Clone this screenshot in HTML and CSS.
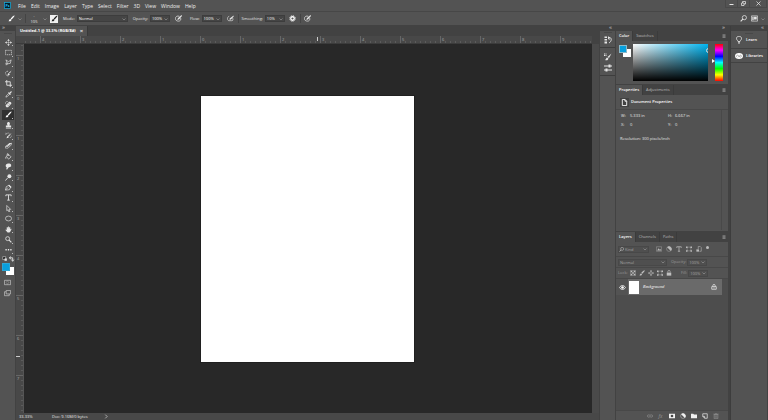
FILE: index.html
```html
<!DOCTYPE html>
<html lang="en">
<head>
<meta charset="utf-8">
<title>Untitled-1</title>
<link rel="stylesheet" href="styles.css">
</head>
<body>
<svg class="defs" aria-hidden="true">
  <symbol id="chev" viewBox="0 0 8 8"><path d="M1 3l3 3 3-3"/></symbol>
  <symbol id="menu" viewBox="0 0 8 8"><path d="M1 1.500h6M1 3.500h6M1 5.500h6M1 7.300h6"/></symbol>
  <symbol id="move" viewBox="0 0 16 16"><path d="M8 2v12M2 8h12"/><path class="f" d="M8 0l3 4H5zM8 16l3-4H5zM0 8l4-3v6zM16 8l-4-3v6z"/></symbol>
  <symbol id="marquee" viewBox="0 0 16 16"><path stroke-width="1.500" stroke-dasharray="3 1.500" d="M1 3h14v10H1z"/></symbol>
  <symbol id="lasso" viewBox="0 0 16 16"><path stroke-width="1.500" d="M2 2l6 4 6-4-2 8-6 1zM6 11l-4-2 1 5 3-3"/></symbol>
  <symbol id="quick" viewBox="0 0 16 16"><path stroke-width="1.500" stroke-dasharray="2 1" d="M7 3C2 2 0 6 2 10s5 4 7 3"/><path class="f" d="M15 1L9 6l2 2zM8 7l3 3c-2 3-4 2-6 2 2-1 1-4 3-5z"/></symbol>
  <symbol id="crop" viewBox="0 0 16 16"><path stroke-width="2" d="M4 0v12h12M0 4h12v12"/></symbol>
  <symbol id="dropper" viewBox="0 0 16 16"><path stroke-width="1.500" d="M2 14l1-3 6-6 2 2-6 6z"/><path class="f" d="M8 3l2 1 3-3c2-1 3 1 2 2l-3 3 1 2-1 1-5-5z"/></symbol>
  <symbol id="heal" viewBox="0 0 16 16"><path class="f" d="M2 9l7-7c3-2 7 2 5 5l-7 7c-3 2-7-2-5-5z"/><path d="M1 7c-1-4 2-7 6-6"/><path class="dark" d="M5 8l4 4M8 5l4 4"/></symbol>
  <symbol id="brush" viewBox="0 0 16 16"><path class="f" d="M15 1c1 1-5 8-7 9L6 8c2-3 8-8 9-7zM5 9l3 2c-1 4-4 4-7 3 2-1 1-4 4-5z"/></symbol>
  <symbol id="stamp" viewBox="0 0 16 16"><path class="f" d="M6 8C3 2 6 0 8 0s5 2 2 8h4v4H2V8zM2 13h12v2H2z"/></symbol>
  <symbol id="history" viewBox="0 0 16 16"><path class="f" d="M15 2L9 10 7 8zM6 9l3 2c-1 3-3 3-6 3 2-1 1-4 3-5z"/><path d="M2 7V2l2 2c2-2 5-2 6-1M11 13c3 0 4-3 3-5"/></symbol>
  <symbol id="eraser" viewBox="0 0 16 16"><path class="f" d="M5 7l5-5h5l-5 5z"/><path class="f" d="M1 10l3-3h6l-3 3z" opacity=".8"/><path stroke-width="1.300" d="M1 10h6l8-8v4l-8 8H1z"/></symbol>
  <symbol id="bucket" viewBox="0 0 16 16"><path stroke-width="1.500" d="M3 7l5-4 6 6-6 5zM5 6V2c1-2 3 0 3 5"/><path class="f" d="M2 8c-2 3-1 5 0 5s2-2 0-5z"/></symbol>
  <symbol id="smudge" viewBox="0 0 16 16"><path class="f" d="M3 3c2-3 10-3 11 1v4l-6 2-3 5c-3 0-2-3-1-5-3-1-3-5-1-7z"/></symbol>
  <symbol id="dodge" viewBox="0 0 16 16"><circle class="f" cx="10" cy="5" r="4.500"/><path stroke-width="2" d="M6 9l-5 6"/></symbol>
  <symbol id="pen" viewBox="0 0 16 16"><path stroke-width="1.500" d="M1 14l2-8 6-3 4 4-3 6zM1 14l6-6"/><path class="f" d="M9 1l6 6-2 2-5-5z"/></symbol>
  <symbol id="type" viewBox="0 0 16 16"><path stroke-width="2" d="M2 5V2h12v3M8 2v12M5 14h6"/></symbol>
  <symbol id="arrow" viewBox="0 0 16 16"><path stroke-width="1.500" d="M4 1l9 9H9l2 5-2 1-2-5-3 2z"/></symbol>
  <symbol id="ellipse" viewBox="0 0 16 16"><ellipse stroke-width="1.500" cx="8" cy="8" rx="7" ry="5.500"/></symbol>
  <symbol id="hand" viewBox="0 0 16 16"><path class="f" d="M4 9V3l2-1 1 5V1h2v6l1-5 2 1v5l2-2 1 1-3 6-2 2H6L1 9l1-1z"/></symbol>
  <symbol id="zoom" viewBox="0 0 16 16"><circle cx="6" cy="6" r="4.500" stroke-width="1.800"/><path stroke-width="2.500" d="M9.500 9.500l5 5"/></symbol>
  <symbol id="find" viewBox="0 0 16 16"><circle cx="10" cy="6" r="4.800" stroke-width="1.800"/><path stroke-width="2.500" d="M6.500 9.500l-5 5"/></symbol>
  <symbol id="dots" viewBox="0 0 16 16"><path class="f" d="M1 7h3v3H1zM6.500 7h3v3h-3zM12 7h3v3h-3z"/></symbol>
  <symbol id="mask" viewBox="0 0 16 16"><path stroke-width="1.500" d="M1 3h14v10H1z"/><circle cx="8" cy="8" r="3" stroke-dasharray="2 1"/></symbol>
  <symbol id="screen" viewBox="0 0 16 16"><path stroke-width="1.500" d="M5 1h10v8H5zM12 9v4H1V4h4"/></symbol>
  <symbol id="press" viewBox="0 0 16 16"><path stroke-width="1.700" d="M10 3C5 1 1 4 1 8s3 6 7 6 6-3 5-7"/><path class="f" d="M15 0l1 2-7 8-4 1 2-4z"/></symbol>
  <symbol id="air" viewBox="0 0 16 16"><path stroke-width="1.500" d="M5 3C0 4 0 12 4 13h7c3 0 3-3 2-6"/><path class="f" d="M15 1v3l-6 6-3 1V8z"/></symbol>
  <symbol id="gear" viewBox="0 0 16 16"><circle cx="8" cy="8" r="4" stroke-width="3"/><circle cx="8" cy="8" r="6.500" stroke-width="2" stroke-dasharray="2.500 2.600"/></symbol>
  <symbol id="space" viewBox="0 0 16 16"><path stroke-width="1.500" d="M1 2h14v12H1z"/><path class="f" d="M3 4h3v8H3zM7 4h6v6H7z"/></symbol>
  <symbol id="hist" viewBox="0 0 16 16"><path class="f" d="M1 1h5v3H1zM1 6h5v3H1zM1 11h5v4H1z"/><path stroke-width="1.800" d="M9 3h3c4 2 3 8-2 11M9 1v5h3"/></symbol>
  <symbol id="brushes" viewBox="0 0 16 16"><path class="f" d="M15 1l-5 9-3-2zM6 9l3 2c-1 4-4 4-7 3 2-1 2-4 4-5zM0 1h2v2H0zM3 1h2v2H3zM0 4h2v2H0zM3 4h2v2H3z"/></symbol>
  <symbol id="sliders" viewBox="0 0 16 16"><path stroke-width="2" d="M0 4h16M0 12h16"/><path class="f" d="M9 1h4v6H9zM3 9h4v6H3z"/></symbol>
  <symbol id="bulb" viewBox="0 0 16 16"><path stroke-width="1.400" d="M6 11c0-2-3-3-3-6 0-6 10-6 10 0 0 3-3 4-3 6zM6 13.500h4M7 15.500h2"/></symbol>
  <symbol id="cloud" viewBox="0 0 20 16"><ellipse class="f" cx="10" cy="8" rx="10" ry="7.500"/><path class="dark" d="M5 11c-3-2-1-6 2-5l6 5c4 0 4-6 0-5l-5 5"/></symbol>
  <symbol id="doc" viewBox="0 0 16 16"><path stroke-width="2" d="M3 1h6l4 4v10H3zM9 1v4h4"/></symbol>
  <symbol id="pic" viewBox="0 0 16 16"><path d="M1 2h14v12H1z"/><path class="f" d="M3 12l4-6 3 4 2-2 2 4z"/></symbol>
  <symbol id="adjust" viewBox="0 0 16 16"><circle cx="8" cy="8" r="6.500"/><path class="f" d="M3 3a7 7 0 0 1 10 10z"/></symbol>
  <symbol id="shape" viewBox="0 0 16 16"><path d="M3 3h10v10H3z"/><path class="f" d="M0 1h4v4H0zM12 1h4v4h-4zM0 11h4v4H0zM12 11h4v4h-4z"/></symbol>
  <symbol id="smart" viewBox="0 0 16 16"><path stroke-width="1.500" d="M6 8V1h5l3 3v10h-5"/><path class="f" d="M1 9h7v6H1z"/></symbol>
  <symbol id="checker" viewBox="0 0 16 16"><path d="M1 1h14v14H1z"/><path class="f" d="M2 2h4v4H2zM10 2h4v4h-4zM6 6h4v4H6zM2 10h4v4H2zM10 10h4v4h-4z"/></symbol>
  <symbol id="lock" viewBox="0 0 16 16"><path class="f" d="M2 7h12v8H2z"/><path stroke-width="1.800" d="M5 7V4c0-4 6-4 6 0v3"/></symbol>
  <symbol id="lockline" viewBox="0 0 16 16"><path stroke-width="1.700" d="M2 7h12v7H2zM5 7V4c0-4 6-4 6 0v3M8 9v3"/></symbol>
  <symbol id="eye" viewBox="0 0 16 16"><path stroke-width="1.800" d="M1 8c4-6 10-6 14 0-4 6-10 6-14 0z"/><circle class="f" cx="8" cy="8" r="3"/></symbol>
  <symbol id="link" viewBox="0 0 16 16"><path stroke-width="1.500" d="M7 11H4c-4 0-4-6 0-6h3M9 5h3c4 0 4 6 0 6H9M5 8h6"/></symbol>
  <symbol id="addmask" viewBox="0 0 16 16"><path class="f" d="M0 2h16v12H0z"/><circle cx="8" cy="8" r="3.500" fill="#444" stroke="none"/></symbol>
  <symbol id="folder" viewBox="0 0 16 16"><path class="f" d="M0 2h6l2 2h8v10H0z"/></symbol>
  <symbol id="page" viewBox="0 0 16 16"><path stroke-width="1.800" d="M2 2h12v12H7L2 9zM2 9h5v5"/></symbol>
  <symbol id="trash" viewBox="0 0 16 16"><path stroke-width="1.500" d="M3 4h10v11H3zM1 3h14M6 1h4M6 6v7M10 6v7"/></symbol>
</svg>

<header class="menubar">
  <svg class="logo" viewBox="0 0 14 14" role="img" aria-label="Ps"><rect x="1" y="1" width="12" height="12" fill="#001d2b" stroke="#14a9d8" stroke-width="1.500"/><text x="7" y="9.500" text-anchor="middle">Ps</text></svg>
  <nav class="menus"><a href="#">File</a><a href="#">Edit</a><a href="#">Image</a><a href="#">Layer</a><a href="#">Type</a><a href="#">Select</a><a href="#">Filter</a><a href="#">3D</a><a href="#">View</a><a href="#">Window</a><a href="#">Help</a></nav>
  <div class="window-buttons">
    <button aria-label="Minimize"><svg viewBox="0 0 10 10"><path stroke-width="2" d="M1 7h8"/></svg></button>
    <button aria-label="Restore"><svg viewBox="0 0 10 10"><path stroke-width="1.500" d="M1 4h5v5H1zM3 4V1h6v5H6"/></svg></button>
    <button aria-label="Close"><svg viewBox="0 0 10 10"><path stroke-width="1.500" d="M1 1l8 8M9 1L1 9"/></svg></button>
  </div>
</header>

<div class="options">
  <button class="big" aria-label="Brush tool"><svg><use href="#brush"/></svg></button>
  <svg class="chev"><use href="#chev"/></svg><i class="sep"></i>
  <button class="size" aria-label="Brush size"><span>·</span><span>105</span></button>
  <svg class="chev"><use href="#chev"/></svg>
  <button class="preset" aria-label="Brush settings"><svg><use href="#brush"/></svg></button>
  <label for="mode">Mode:</label>
  <span class="pick mode"><select id="mode"><option>Normal</option></select><svg class="chev"><use href="#chev"/></svg></span>
  <label for="opacity">Opacity:</label>
  <span class="pick num"><input id="opacity" value="100%"><svg class="chev"><use href="#chev"/></svg></span>
  <button class="wide" aria-label="Pressure opacity"><svg><use href="#press"/></svg></button>
  <label for="flow">Flow:</label>
  <span class="pick num"><input id="flow" value="100%"><svg class="chev"><use href="#chev"/></svg></span>
  <button class="wide" aria-label="Airbrush"><svg><use href="#air"/></svg></button><i class="sep"></i>
  <label for="smooth">Smoothing:</label>
  <span class="pick num"><input id="smooth" value="10%"><svg class="chev"><use href="#chev"/></svg></span>
  <button class="bright" aria-label="Smoothing options"><svg><use href="#gear"/></svg></button><i class="sep"></i>
  <button aria-label="Pressure size"><svg><use href="#press"/></svg></button>
  <div class="opt-right"><button aria-label="Search"><svg><use href="#find"/></svg></button><button aria-label="Workspace"><svg><use href="#space"/></svg></button><svg class="chev"><use href="#chev"/></svg></div>
</div>

<main class="work">
  <aside class="toolbox">
    <div class="cap start">»</div>
    <div class="grip"></div>
    <div class="tools">
      <button aria-label="Move"><svg><use href="#move"/></svg></button>
      <button aria-label="Marquee"><svg><use href="#marquee"/></svg></button>
      <button aria-label="Lasso"><svg><use href="#lasso"/></svg></button>
      <button aria-label="Quick selection"><svg><use href="#quick"/></svg></button>
      <button aria-label="Crop"><svg><use href="#crop"/></svg></button>
      <button aria-label="Eyedropper"><svg><use href="#dropper"/></svg></button>
      <button aria-label="Healing"><svg><use href="#heal"/></svg></button>
      <button class="on" aria-label="Brush"><svg><use href="#brush"/></svg></button>
      <button aria-label="Stamp"><svg><use href="#stamp"/></svg></button>
      <button aria-label="History brush"><svg><use href="#history"/></svg></button>
      <button aria-label="Eraser"><svg><use href="#eraser"/></svg></button>
      <button aria-label="Paint bucket"><svg><use href="#bucket"/></svg></button>
      <button aria-label="Smudge"><svg><use href="#smudge"/></svg></button>
      <button aria-label="Dodge"><svg><use href="#dodge"/></svg></button>
      <button aria-label="Pen"><svg><use href="#pen"/></svg></button>
      <button aria-label="Type"><svg><use href="#type"/></svg></button>
      <button aria-label="Path selection"><svg><use href="#arrow"/></svg></button>
      <button aria-label="Ellipse"><svg><use href="#ellipse"/></svg></button>
      <button aria-label="Hand"><svg><use href="#hand"/></svg></button>
      <button aria-label="Zoom"><svg><use href="#zoom"/></svg></button>
      <button aria-label="More tools"><svg><use href="#dots"/></svg></button>
    </div>
    <svg class="mini" viewBox="0 0 24 10"><path fill="#111" stroke="#ddd" d="M3 1h5v5H3z"/><path class="f" d="M6 4h4v4H6z"/><path stroke-width="1.500" d="M15 3h5v5M17 1l-3 2 3 2M18 6l2 3 2-3"/></svg>
    <div class="swatches"><i></i><i></i></div>
    <div class="modes"><button aria-label="Quick mask"><svg><use href="#mask"/></svg></button><button aria-label="Screen mode"><svg><use href="#screen"/></svg></button></div>
  </aside>

  <section class="document">
    <div class="doc-tabs"><a href="#" class="doc-tab">Untitled-1 @ 33.3% (RGB/8#)<span>×</span></a></div>
    <div class="ruler-x"><i>4</i><i>3</i><i>2</i><i>1</i><i>0</i><i>1</i><i class="cursor">2</i><i>3</i><i>4</i><i>5</i><i>6</i><i>7</i><i>8</i><i>9</i></div>
    <div class="stage">
      <div class="ruler-y"><i>1</i><i>0</i><i>1</i><i>2</i><i>3</i><i>4</i><i>5</i><i class="cursor">6</i><i>7</i></div>
      <div class="canvas"><div class="paper"></div></div>
      <div class="scroll"></div>
    </div>
    <footer class="status"><span class="pct">33.33%</span><span class="info">Doc: 9.16M/0 bytes</span><svg viewBox="0 0 8 8"><path d="M2 1l3 3-3 3"/></svg></footer>
  </section>

  <aside class="dock">
    <div class="cap">«</div>
    <div class="dock-body"><div class="grip"></div>
    <button aria-label="History"><svg><use href="#hist"/></svg></button>
    <div class="grip line"></div>
    <button aria-label="Brushes"><svg><use href="#brushes"/></svg></button>
    <button aria-label="Brush settings"><svg><use href="#sliders"/></svg></button>
    <div class="grip line"></div></div>
  </aside>

  <aside class="panels">
    <div class="cap">»</div>
    <section class="color">
      <div class="tabs"><button class="on">Color</button><button>Swatches</button><svg><use href="#menu"/></svg></div>
      <div class="color-body"><div class="swatches"><i></i><i></i></div><div class="field"><i></i></div><div class="hue"><i></i></div></div>
    </section>
    <section class="props">
      <div class="tabs"><button class="on">Properties</button><button>Adjustments</button><svg><use href="#menu"/></svg></div>
      <h2><span><svg><use href="#doc"/></svg></span>Document Properties</h2>
      <div class="props-body">
        <dl><dt>W:</dt><dd>5.333 in</dd><dt>H:</dt><dd>6.667 in</dd><dt>X:</dt><dd>0</dd><dt>Y:</dt><dd>0</dd></dl>
        <p>Resolution: 300 pixels/inch</p>
      </div>
    </section>
    <section class="layers">
      <div class="tabs"><button class="on">Layers</button><button>Channels</button><button>Paths</button><svg><use href="#menu"/></svg></div>
      <div class="row filter">
        <span class="pick kind"><svg class="lens"><use href="#find"/></svg><select aria-label="Filter type"><option>Kind</option></select><svg class="chev"><use href="#chev"/></svg></span>
        <div class="filters"><svg><use href="#pic"/></svg><svg><use href="#adjust"/></svg><svg><use href="#type"/></svg><svg><use href="#shape"/></svg><svg><use href="#smart"/></svg><i></i></div>
      </div>
      <div class="row faded">
        <span class="pick blend"><select aria-label="Blend mode"><option>Normal</option></select><svg class="chev"><use href="#chev"/></svg></span>
        <label for="lop">Opacity:</label><span class="pick num"><input id="lop" value="100%"><svg class="chev"><use href="#chev"/></svg></span>
      </div>
      <div class="row faded">
        <span class="lock-label">Lock:</span>
        <div class="locks"><svg><use href="#checker"/></svg><svg><use href="#brush"/></svg><svg><use href="#move"/></svg><svg><use href="#shape"/></svg><svg><use href="#lock"/></svg></div>
        <label class="fill" for="lfill">Fill:</label><span class="pick num"><input id="lfill" value="100%"><svg class="chev"><use href="#chev"/></svg></span>
      </div>
      <div class="list">
        <div class="layer"><button class="eye" aria-label="Visibility"><svg><use href="#eye"/></svg></button><div class="layer-main"><i></i><em>Background</em><svg><use href="#lockline"/></svg></div></div>
      </div>
      <div class="layer-actions">
        <button class="dim" aria-label="Link"><svg><use href="#link"/></svg></button><button class="dim fx">fx</button><button aria-label="Add mask"><svg><use href="#addmask"/></svg></button><button aria-label="Adjustment"><svg><use href="#adjust"/></svg></button><button aria-label="Group"><svg><use href="#folder"/></svg></button><button aria-label="New layer"><svg><use href="#page"/></svg></button><button class="dim" aria-label="Delete"><svg><use href="#trash"/></svg></button>
      </div>
    </section>
  </aside>

  <aside class="learn">
    <div class="cap">«</div>
    <div class="grip"></div>
    <button><svg><use href="#bulb"/></svg>Learn</button>
    <div class="grip line"></div>
    <button><svg><use href="#cloud"/></svg>Libraries</button>
    <div class="rest"></div>
  </aside>
</main>
</body>
</html>
```
FILE: styles.css
```css
* { box-sizing: border-box; }
body {
  margin: 0;
  height: 100vh;
  display: flex;
  flex-direction: column;
  overflow: hidden;
  background: #535353;
  color: #e6e6e6;
  font: 4px/6px "Open Sans", "Noto Sans", sans-serif;
}
button, input, select {
  appearance: none;
  margin: 0;
  padding: 0;
  border: 0;
  border-radius: 0;
  background: none;
  color: inherit;
  font: inherit;
}
button { display: flex; align-items: center; justify-content: center; }
a { color: inherit; text-decoration: none; }
i { font-style: normal; }
svg { display: block; flex: none; width: 7px; height: 7px; fill: none; stroke: currentColor; }
.f { fill: currentColor; stroke: none; }
.dark { stroke: #484848; }
.defs { position: absolute; width: 0; height: 0; }
.chev { width: 4px; height: 4px; color: #b0b0b0; }

.menubar { flex: none; height: 12px; display: flex; align-items: center; padding-left: 4px; border-bottom: 1px solid #474747; font-size: 5px; }
.logo { width: 7px; height: 7px; stroke: none; }
.logo text { fill: #26c0f4; font: bold 7px "Open Sans", sans-serif; }
.menus { display: flex; gap: 5px; margin-left: 7px; color: #eee; }
.window-buttons { display: flex; align-self: flex-start; margin: 0 1px 0 auto; }
.window-buttons button { width: 12px; height: 8px; border: 1px solid #494949; border-top: 0; border-right: 0; }
.window-buttons button:last-child { width: 18px; border-right: 1px solid #494949; }
.window-buttons svg { width: 5px; height: 5px; }

.options { flex: none; height: 14px; display: flex; align-items: center; padding-left: 7px; border-bottom: 1px solid #424242; }
.options button { width: 8px; }
.options .big { margin-right: 3px; color: #fff; }
.options .sep { width: 1px; height: 9px; margin: 0 3px; background: #444; }
.options .size { flex-direction: column; width: 10px; margin-right: 4px; line-height: 5px; }
.options .size span { height: 5px; }
.options .preset { height: 8px; margin: 0 5px 0 3px; background: #f0f0f0; color: #222; }
.options .wide { width: 9px; margin: 0 7px 0 4px; }
.options .wide + .sep { margin-left: -4px; }
.options .bright { color: #fff; margin-left: 4px; }
.options label { margin-right: 2px; }
.pick { display: flex; align-items: center; height: 7px; background: #454545; border: 1px solid #3d3d3d; }
.pick .chev { margin-right: 1px; }
.pick select, .pick input { flex: 1; min-width: 0; width: 100%; height: 5px; line-height: 5px; padding-left: 1px; color: #fff; }
.mode { width: 51px; margin-right: 5px; }
.num { width: 20px; }
.opt-right { display: flex; gap: 3px; align-items: center; margin: 0 3px 0 auto; }

.work { flex: 1; min-height: 0; display: flex; background: #424242; }
.cap { flex: none; height: 5px; padding-right: 3px; background: #424242; color: #ccc; text-align: right; font-size: 6px; line-height: 3px; }
.cap.start { padding-left: 2px; text-align: left; }
.grip { flex: none; height: 1px; width: 8px; margin: 2px auto 3px; background: #484848; }

.toolbox { width: 16px; display: flex; flex-direction: column; background: #535353; border-right: 1px solid #424242; }
.tools { flex: none; height: 218px; display: grid; grid-auto-rows: 1fr; }
.tools button { position: relative; margin: 0 1px 0 2px; }
.tools button::after { content: ""; position: absolute; right: 1px; bottom: 1px; width: 1px; height: 1px; background: #bbb; }
.tools .on { background: #303030; color: #fff; }
.mini { width: 14px; height: 6px; margin: 1px 0 1px 1px; }
.swatches { position: relative; width: 12px; height: 12px; margin-left: 2px; }
.swatches i { position: absolute; width: 8px; height: 8px; background: #fff; right: 0; bottom: 0; }
.swatches i:first-child { z-index: 1; top: 0; left: 0; background: #089fdc; border: 1px solid #8bb8c9; }
.toolbox .swatches i:first-child { border-color: #2ba6d6; }
.modes { display: flex; flex-direction: column; align-items: center; gap: 4px; margin-top: 4px; color: #ccc; }

.document { flex: 1; min-width: 0; display: flex; flex-direction: column; margin-right: 1px; }
.doc-tabs { flex: none; height: 10px; display: flex; background: #424242; }
.doc-tab { display: flex; align-items: center; gap: 4px; padding: 0 4px; background: #535353; color: #fff; font-family: "Noto Sans", sans-serif; font-weight: 700; border-right: 1px solid #393939; }
.doc-tab span { font-weight: 400; font-size: 6px; }
.ruler-x, .ruler-y { flex: none; display: flex; overflow: hidden; color: #aaa; background-color: #484848; }
.ruler-x {
  height: 8px;
  padding-left: 25px;
  margin-right: 7px;
  border-bottom: 1px solid #3c3c3c;
  background-image: linear-gradient(90deg, #484848 8px, transparent 8px), linear-gradient(90deg, #666 1px, transparent 1px), linear-gradient(90deg, #5c5c5c 1px, transparent 1px);
  background-size: 8px 100%, 40px 7px, 5px 2px;
  background-position: 0 0, 24px 0, 4px 5px;
  background-repeat: no-repeat, repeat-x, repeat-x;
}
.ruler-x i { flex: none; width: 40px; padding-left: 1px; line-height: 7px; }
.ruler-x .cursor { background: linear-gradient(#ccc, #ccc) 36px 1px / 1px 4px no-repeat; }
.stage { flex: 1; min-height: 0; display: flex; }
.ruler-y {
  width: 8px;
  flex-direction: column;
  padding-top: 12px;
  border-right: 1px solid #555;
  background-image: linear-gradient(#666 1px, transparent 1px), linear-gradient(#5c5c5c 1px, transparent 1px);
  background-size: 7px 40px, 2px 5px;
  background-position: 0 11px, 5px 1px;
  background-repeat: repeat-y;
}
.ruler-y i { flex: none; height: 40px; padding-left: 1px; line-height: 5px; }
.ruler-y .cursor { background: linear-gradient(#ccc, #ccc) 0 20px / 4px 1px no-repeat; }
.canvas { flex: 1; display: flex; padding: 52px 0 0 177px; background: #282828; }
.paper { width: 213px; aspect-ratio: 213 / 266; align-self: flex-start; background: #fff; outline: 1px solid #202020; }
.scroll { width: 7px; background: #4a4a4a; }
.status { flex: none; height: 7px; display: flex; align-items: center; background: #484848; }
.pct { width: 20px; padding-left: 3px; }
.info { width: 53px; padding-left: 16px; white-space: nowrap; }
.status svg { width: 5px; height: 5px; margin-left: 15px; }

.dock { flex: none; width: 15px; display: flex; flex-direction: column; }
.dock-body { flex: 1; display: flex; flex-direction: column; align-items: center; background: #535353; }
.dock .grip { margin: 1px 0; }
.dock button { height: 11px; }
.dock svg { width: 8px; height: 8px; }
.dock .grip.line { width: 15px; background: #3d3d3d; margin: 2px 0 3px; }

.panels { flex: none; width: 114px; display: flex; flex-direction: column; margin-left: 1px; padding-right: 2px; }
.panels section { background: #535353; }
.tabs { height: 10px; display: flex; background: #424242; color: #bbb; }
.tabs button { padding: 0 3px; border-right: 1px solid #3b3b3b; }
.tabs .on { background: #535353; color: #fff; font-weight: 600; }
.tabs svg { width: 4px; height: 4px; margin: 3px 2px 0 auto; }
.color { flex: none; height: 53px; }
.color-body { display: flex; padding: 3px 5px 0 3px; }
.color .swatches { margin: 1px 2px 0 0; }
.field { position: relative; width: 75px; height: 37px; background: linear-gradient(transparent, #000), linear-gradient(90deg, #fff, #00b4f0); overflow: hidden; }
.field i { position: absolute; right: -3px; top: 4px; width: 5px; height: 5px; border: 1px solid #ddd; border-radius: 50%; }
.hue { position: relative; width: 8px; height: 37px; margin-left: 7px; background: linear-gradient(red, #f0f, #00f, #0ff, #0f0, #ff0, red); }
.hue i { position: absolute; left: -3px; top: 15px; border: solid transparent; border-width: 2px 0 2px 3px; border-left-color: #fff; }
.props { flex: none; height: 146px; margin-top: 1px; border-bottom: 1px solid #535353; }
.props h2 { display: flex; align-items: center; gap: 2px; height: 15px; margin: 0; padding-left: 4px; border-bottom: 1px solid #484848; color: #fff; font-size: 4px; font-weight: 600; }
.props h2 span { padding: 1px; background: #424242; }
.props h2 svg { width: 7px; height: 7px; }
.props-body { height: 120px; margin-right: 6px; padding: 3px 4px; background: #525252; border-right: 1px solid #494949; }
.props dl { display: grid; grid-template-columns: 9px 38px 7px 40px; row-gap: 3px; margin: 0 0 8px 1px; }
.props dd, .props p { margin: 0; }
.layers { flex: 1; min-height: 0; display: flex; flex-direction: column; margin-top: 1px; }
.layers .tabs { flex: none; }
.row { flex: none; height: 11px; display: flex; align-items: center; padding: 0 2px; border-bottom: 1px solid #484848; color: #bbb; }
.row.filter { height: 15px; }
.row .pick { background: #4f4f4f; border-color: #484848; }
.row .pick select, .row .pick input { color: #a4a4a4; }
.row label { margin: 0 1px 0 4px; }
.kind { width: 31px; }
.lens { width: 5px; height: 5px; }
.filters, .locks { display: flex; }
.filters { gap: 4px; margin-left: 7px; }
.filters svg { width: 6px; height: 6px; }
.filters i { width: 3px; height: 3px; border-radius: 50%; background: #bbb; }
.blend { width: 49px; }
.row.faded { color: #999; }
.lock-label { width: 12px; }
.row .locks { gap: 3px; color: #c0c0c0; }
.locks svg { width: 6px; height: 6px; }
.row .fill { margin-left: 9px; }
.list { flex: 1; background: #4d4d4d; }
.layer { display: flex; height: 16px; margin-right: 6px; background: #535353; }
.eye { width: 12px; color: #fff; }
.layer-main { flex: 1; display: flex; align-items: center; padding: 0 5px 0 1px; background: #6a6a6a; color: #fff; }
.layer-main i { width: 10px; height: 13px; margin-right: 4px; background: #fff; }
.layer-main svg { width: 6px; height: 6px; margin-left: auto; }
.layer-actions { flex: none; height: 10px; display: flex; justify-content: flex-end; gap: 4px; padding-right: 9px; border-top: 1px solid #484848; color: #f0f0f0; }
.layer-actions button { width: 7px; }
.layer-actions svg { width: 6px; height: 6px; }
.layer-actions .dim { color: #999; }
.fx { font-style: italic; font-size: 5px; }

.learn { flex: none; width: 38px; display: flex; flex-direction: column; background: #535353; border-left: 1px solid #3d3d3d; border-right: 1px solid #424242; }
.learn button { height: 10px; justify-content: flex-start; gap: 3px; padding-left: 4px; color: #fff; font-weight: 600; }
.learn svg { width: 8px; height: 8px; }
.learn .grip { margin-bottom: 1px; }
.learn .grip.line { width: 100%; height: 1px; margin: 3px 0 2px; background: #424242; }
.rest { flex: 1; margin-top: 1px; border-top: 1px solid #424242; }
```
